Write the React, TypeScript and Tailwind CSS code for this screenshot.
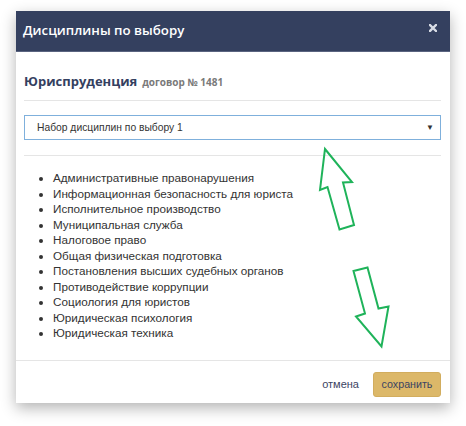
import React from 'react'

const disciplines = [
  'Административные правонарушения',
  'Информационная безопасность для юриста',
  'Исполнительное производство',
  'Муниципальная служба',
  'Налоговое право',
  'Общая физическая подготовка',
  'Постановления высших судебных органов',
  'Противодействие коррупции',
  'Социология для юристов',
  'Юридическая психология',
  'Юридическая техника',
]

export default function App() {
  return (
    <div className="relative w-[466px] h-[426px] bg-white overflow-hidden">
      {/* Modal */}
      <div className="absolute left-[16px] top-[11px] w-[434px] bg-white shadow-[0_5px_14px_rgba(0,0,0,0.3)]">
        {/* Header */}
        <div className="h-[41px] bg-[#34405f] border-b border-[#5a6480] flex items-center justify-between pl-[7px] pr-[13px]">
          <span className="text-[13.25px] font-semibold text-white font-['Open_Sans',sans-serif]">Дисциплины по выбору</span>
          <svg width="8" height="8" viewBox="0 0 8 8" className="mt-[-6px]">
            <path d="M1 1 L7 7 M7 1 L1 7" stroke="#d9dde6" strokeWidth="2.4" strokeLinecap="square" />
          </svg>
        </div>

        {/* Body */}
        <div className="px-[8px] pr-[9px] pt-[20px] pb-[19px]">
          <div className="h-[20px] flex items-baseline gap-[5px] font-['Open_Sans',sans-serif]">
            <span className="text-[13px] font-bold text-[#34405f]">Юриспруденция</span>
            <span className="text-[10px] font-bold text-[#7a7a7a]">договор № 1481</span>
          </div>
          <div className="mt-[8px] border-t border-[#e5e5e5]" />

          <div className="mt-[14px] h-[25px] border border-[#7fb0dc] flex items-center justify-between pl-[12px] pr-[6px] font-['Liberation_Sans',Arial,sans-serif]">
            <span className="text-[10.3px] text-[#333]">Набор дисциплин по выбору 1</span>
            <span className="text-[8px] text-[#333]">▼</span>
          </div>

          <div className="mt-[15px] border-t border-[#e5e5e5]" />

          <ul className="mt-[14px] list-disc pl-[29px] text-[11.7px] leading-[15.5px] text-[#333] font-['Liberation_Sans',Arial,sans-serif]">
            {disciplines.map((d) => (
              <li key={d}>{d}</li>
            ))}
          </ul>
        </div>

        {/* Footer */}
        <div className="border-t border-[#e5e5e5] h-[43px] flex items-center justify-end gap-[14px] pr-[9px] pt-[6px] font-['Liberation_Sans',Arial,sans-serif]">
          <span className="text-[11px] text-[#3b4462]">отмена</span>
          <button className="h-[25px] w-[68px] rounded-[3px] bg-[#dcb869] border border-[#d2ad5e] text-[10.7px] text-[#3b4462]">
            сохранить
          </button>
        </div>
      </div>

      {/* Annotation arrows */}
      <svg className="absolute left-0 top-0" width="466" height="426" viewBox="0 0 466 426">
        <polygon
          points="325,149 352,182 343,182.5 354,225 339.5,229.5 327.5,187 320,190"
          fill="none"
          stroke="#1fb35a"
          strokeWidth="2"
          strokeLinejoin="miter"
        />
        <polygon
          points="353.5,271 367.5,267.5 378.5,308.5 388.5,306.5 381.5,346.5 356,316.5 365,313.5"
          fill="none"
          stroke="#1fb35a"
          strokeWidth="2"
          strokeLinejoin="miter"
        />
      </svg>
    </div>
  )
}
